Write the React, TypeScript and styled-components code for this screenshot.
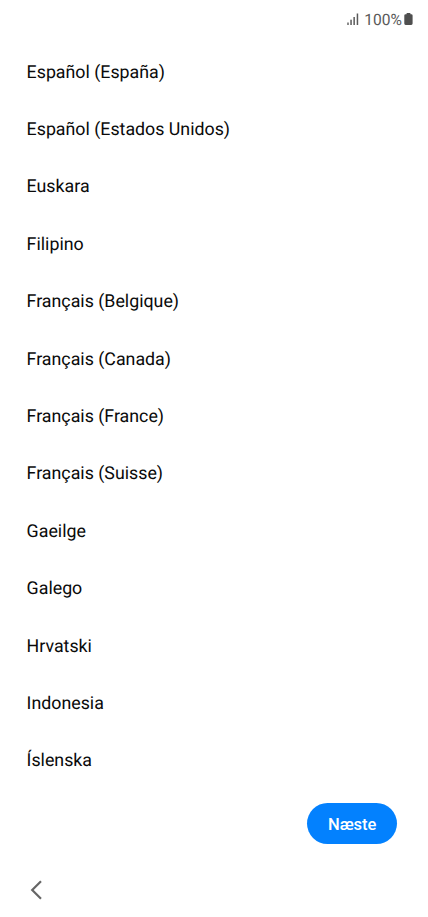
import styled, {createGlobalStyle} from "styled-components";

const languages: string[] = [
  'Español (España)',
  'Español (Estados Unidos)',
  'Euskara',
  'Filipino',
  'Français (Belgique)',
  'Français (Canada)',
  'Français (France)',
  'Français (Suisse)',
  'Gaeilge',
  'Galego',
  'Hrvatski',
  'Indonesia',
  'Íslenska',
];

const GlobalStyle = createGlobalStyle`
  * {
    box-sizing: border-box;
  }

  body {
    margin: 0;
    background-color: #fff;
    font-family: Roboto, "Liberation Sans", sans-serif;
    text-rendering: geometricPrecision;
  }
`

const Screen = styled.div`
  display: flex;
  flex-direction: column;
  width: 428px;
  height: 917px;
  overflow: hidden;
  background-color: #fff;
`

const StatusBar = styled.header`
  display: flex;
  align-items: center;
  justify-content: flex-end;
  height: 43.4px;
  padding: 0 15px 5.4px 0;
  color: #5a5a5a;
  font-size: 15.6px;
`

const BatteryLevel = styled.span`
  margin: 1px 2px 0 5px;
`

const LanguageList = styled.ul`
  margin: 0;
  padding: 0;
  list-style: none;
`

const LanguageItem = styled.li`
  display: flex;
  align-items: center;
  height: 57.42px;
  padding-left: 26.6px;
  color: #0a0a0a;
  font-size: 17.8px;
  cursor: pointer;
`

const Actions = styled.div`
  display: flex;
  justify-content: flex-end;
  padding: 13.1px 31px 0 0;
`

const NextButton = styled.button`
  width: 89.6px;
  height: 40.8px;
  border: none;
  border-radius: 21px;
  padding: 2px 0 0;
  background-color: #0381fe;
  color: #fff;
  font-family: inherit;
  font-size: 16.5px;
  font-weight: 500;
  cursor: pointer;
`

const NavigationBar = styled.nav`
  display: flex;
  margin-top: auto;
  padding: 0 0 17px 30px;
`

const BackButton = styled.button`
  display: flex;
  border: none;
  padding: 0;
  background: none;
  cursor: pointer;
`

function SignalIcon(): JSX.Element {
  return (
    <svg width="12" height="12" viewBox="0 0 12 12" fill="#5a5a5a">
      <rect x="0.3" y="9.5" width="1.4" height="2.5"/>
      <rect x="3.3" y="6.7" width="1.5" height="5.3"/>
      <rect x="6.4" y="4" width="1.5" height="8"/>
      <rect x="9.7" y="0.5" width="1.5" height="11.5"/>
    </svg>
  )
}

function BatteryIcon(): JSX.Element {
  return (
    <svg width="9" height="12" viewBox="0 0 9 12" fill="#4f4f4f">
      <path d="M2.5 1.3V.6Q2.5 0 3.2 0H5.8Q6.5 0 6.5.6V1.3H7.3Q8.6 1.3 8.6 2.6V10.6Q8.6 12 7.2 12H1.6Q.3 12 .3 10.6V2.6Q.3 1.3 1.6 1.3Z"/>
    </svg>
  )
}

function App(): JSX.Element {
  return (
    <>
      <GlobalStyle/>
      <Screen>
        <StatusBar>
          <SignalIcon/>
          <BatteryLevel>100%</BatteryLevel>
          <BatteryIcon/>
        </StatusBar>
        <LanguageList>
          {languages.map(language => <LanguageItem key={language}>{language}</LanguageItem>)}
        </LanguageList>
        <Actions>
          <NextButton>Næste</NextButton>
        </Actions>
        <NavigationBar>
          <BackButton aria-label="Tilbage">
            <svg width="13" height="20" viewBox="0 0 13 20" fill="none" stroke="#666" strokeWidth="2.2">
              <path d="M11 1.2L2.2 10L11 18.8"/>
            </svg>
          </BackButton>
        </NavigationBar>
      </Screen>
    </>
  )
}

export default App;
